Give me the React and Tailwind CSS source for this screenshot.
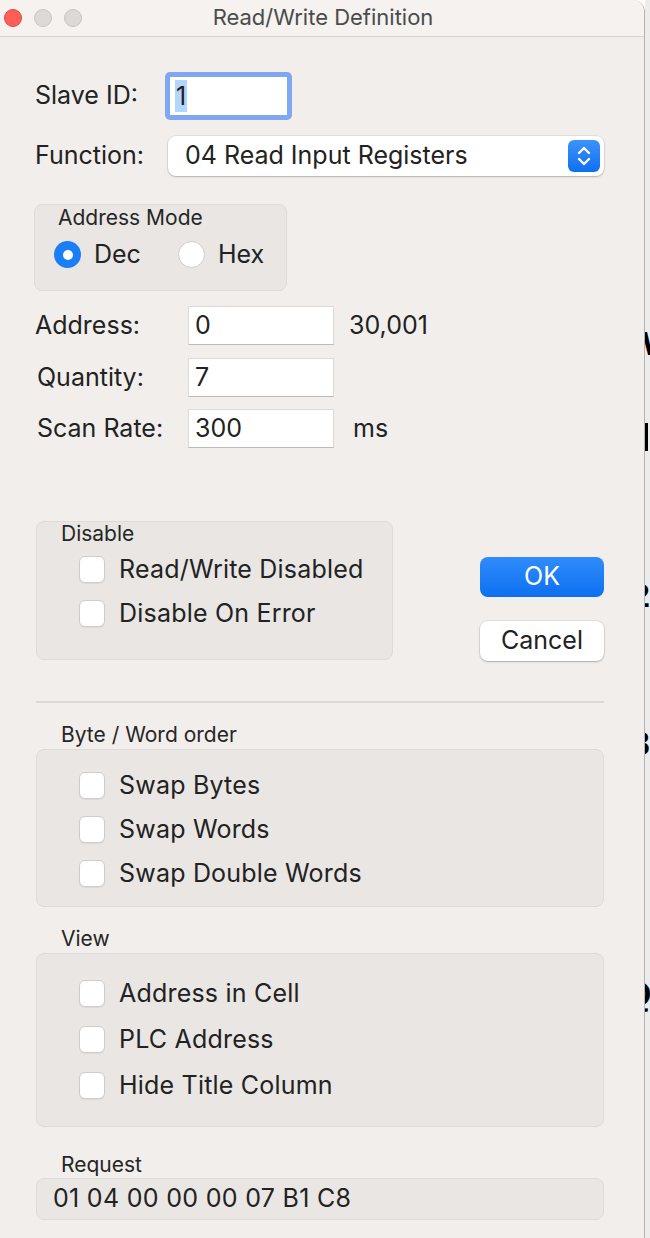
import { useState } from "react";

const font = { fontFamily: "Inter, 'Noto Sans', sans-serif" };

function Field({ value, w = "w-[146px]" }) {
  return (
    <div className={`${w} h-[39px] bg-white border border-[#dcd9d6] border-b-[#bdbab7] flex items-center pl-[6px] text-[25px] text-[#222]`}>
      {value}
    </div>
  );
}

function Check({ label }) {
  return (
    <div className="flex items-center h-[27px]">
      <div className="w-[26px] h-[27px] rounded-[6px] bg-white border border-[#cfccc9] shadow-[0_1px_1px_rgba(0,0,0,0.06)]" />
      <span className="ml-[14px] text-[25px] tracking-[0.2px] text-[#222] leading-none">{label}</span>
    </div>
  );
}

function Radio({ on, label }) {
  return (
    <div className="flex items-center">
      {on ? (
        <div className="w-[27px] h-[27px] rounded-full bg-[#1a7ef7] flex items-center justify-center">
          <div className="w-[10px] h-[10px] rounded-full bg-white" />
        </div>
      ) : (
        <div className="w-[27px] h-[27px] rounded-full bg-white border border-[#cfccc9]" />
      )}
      <span className="ml-[13px] text-[25px] text-[#222] leading-none">{label}</span>
    </div>
  );
}

export default function App() {
  const [slave] = useState("1");

  return (
    <div style={font} className="w-[650px] h-[1238px] flex bg-white overflow-hidden">
      <div className="w-[645px] h-full flex flex-col bg-[#f1eeeb] border-r border-[#b5b3b1] rounded-tr-[12px] overflow-hidden">
        {/* title bar */}
        <div className="h-[37px] shrink-0 flex items-center bg-[#f5f2ef] border-b border-[#d6d3d0]">
          <div className="flex items-center gap-[12px] pl-[4px]">
            <div className="w-[18px] h-[18px] rounded-full bg-[#fe5f57] border border-[#e2463f]" />
            <div className="w-[18px] h-[18px] rounded-full bg-[#dcd9d6] border border-[#c8c5c2]" />
            <div className="w-[18px] h-[18px] rounded-full bg-[#dcd9d6] border border-[#c8c5c2]" />
          </div>
          <div className="flex-1 text-center text-[22px] text-[#4b4b4b] pr-[80px] -mt-[2px]">Read/Write Definition</div>
        </div>

        <div className="flex flex-col pl-[35px] pr-[40px]">
          {/* slave id */}
          <div className="flex items-center h-[48px] mt-[35px]">
            <span className="w-[130px] text-[25px] text-[#222]">Slave ID:</span>
            <div className="w-[127px] h-[48px] rounded-[5px] bg-[#80a8f2] p-[5px]">
              <div className="w-full h-full bg-white flex items-center pl-[5px]">
                <span className="bg-[#b3d6fe] text-[25px] text-[#222] leading-[32px] px-[1px]">{slave}</span>
              </div>
            </div>
          </div>

          {/* function */}
          <div className="flex items-center h-[40px] mt-[16px]">
            <span className="w-[133px] text-[25px] text-[#222]">Function:</span>
            <div className="flex-1 h-[40px] bg-white rounded-[8px] shadow-[0_0_0_1px_rgba(0,0,0,0.06),0_1px_2px_rgba(0,0,0,0.2)] flex items-center pl-[17px] pr-[4px]">
              <span className="flex-1 text-[25px] text-[#222]">04 Read Input Registers</span>
              <div className="w-[32px] h-[32px] rounded-[6px] bg-gradient-to-b from-[#3b93fb] to-[#0c6ff0] flex items-center justify-center">
                <svg width="18" height="24" viewBox="0 0 18 24" fill="none" stroke="white" strokeWidth="2.4" strokeLinecap="round" strokeLinejoin="round">
                  <path d="M4 9l5-5 5 5" />
                  <path d="M4 15l5 5 5-5" />
                </svg>
              </div>
            </div>
          </div>

          {/* address mode */}
          <div className="w-[253px] h-[87px] mt-[28px] -ml-[1px] bg-[#e9e6e4] border border-[#dedbd8] rounded-[8px] flex flex-col pl-[19px]">
            <span className="text-[21px] text-[#262626] leading-[24px] mt-[1px] pl-[4px]">Address Mode</span>
            <div className="flex items-center mt-[11px]">
              <div className="w-[124px]"><Radio on label="Dec" /></div>
              <Radio label="Hex" />
            </div>
          </div>

          {/* address / quantity / scan */}
          <div className="flex items-center mt-[15px]">
            <span className="w-[153px] text-[25px] text-[#222]">Address:</span>
            <Field value="0" />
            <span className="ml-[15px] text-[25px] text-[#222]">30,001</span>
          </div>
          <div className="flex items-center mt-[13px]">
            <span className="w-[153px] pl-[2px] text-[25px] text-[#222]">Quantity:</span>
            <Field value="7" />
          </div>
          <div className="flex items-center mt-[12px]">
            <span className="w-[153px] pl-[2px] text-[25px] text-[#222]">Scan Rate:</span>
            <Field value="300" />
            <span className="ml-[19px] text-[25px] text-[#222]">ms</span>
          </div>

          {/* disable + buttons */}
          <div className="flex mt-[73px]">
            <div className="w-[357px] h-[139px] ml-[1px] bg-[#e9e6e4] border border-[#dedbd8] rounded-[8px] flex flex-col">
              <span className="text-[21px] text-[#262626] leading-[24px] pl-[24px] mt-[0px]">Disable</span>
              <div className="flex flex-col gap-[17px] pl-[42px] mt-[10px]">
                <Check label="Read/Write Disabled" />
                <Check label="Disable On Error" />
              </div>
            </div>
            <div className="flex flex-col ml-[87px] mt-[36px]">
              <div className="w-[124px] h-[40px] rounded-[8px] bg-gradient-to-b from-[#2f8cfb] to-[#0b6ff1] text-white text-[25px] flex items-center justify-center">OK</div>
              <div className="w-[124px] h-[40px] mt-[24px] rounded-[8px] bg-white shadow-[0_0_0_1px_rgba(0,0,0,0.06),0_1px_2px_rgba(0,0,0,0.22)] text-[#222] text-[25px] flex items-center justify-center">Cancel</div>
            </div>
          </div>

          <div className="h-[2px] bg-[#dcd8d5] mt-[40px] ml-[1px] w-[568px]" />

          {/* byte/word order */}
          <span className="text-[21px] text-[#262626] pl-[26px] mt-[20px] leading-[24px]">Byte / Word order</span>
          <div className="w-[568px] ml-[1px] mt-[2px] bg-[#e9e6e4] border border-[#dedbd8] rounded-[8px] flex flex-col gap-[17px] pl-[42px] pt-[22px] pb-[19px]">
            <Check label="Swap Bytes" />
            <Check label="Swap Words" />
            <Check label="Swap Double Words" />
          </div>

          {/* view */}
          <span className="text-[21px] text-[#262626] pl-[26px] mt-[20px] leading-[24px]">View</span>
          <div className="w-[568px] ml-[1px] mt-[2px] bg-[#e9e6e4] border border-[#dedbd8] rounded-[8px] flex flex-col gap-[19px] pl-[42px] pt-[26px] pb-[27px]">
            <Check label="Address in Cell" />
            <Check label="PLC Address" />
            <Check label="Hide Title Column" />
          </div>

          {/* request */}
          <span className="text-[21px] text-[#262626] pl-[26px] mt-[26px] leading-[24px]">Request</span>
          <div className="w-[568px] h-[42px] ml-[1px] mt-[1px] bg-[#e9e6e4] border border-[#dedbd8] rounded-[8px] flex items-center pl-[16px] text-[25px] tracking-[0.3px] text-[#222]">
            01 04 00 00 00 07 B1 C8
          </div>
        </div>
      </div>

      {/* window behind, mostly hidden */}
      <div className="flex-1 h-full relative bg-[#ececec] overflow-hidden text-black font-bold text-[34px]" style={{ fontFamily: "'Liberation Sans', sans-serif" }}>
        <span className="absolute left-[-3px] top-[318px]">W</span>
        <span className="absolute left-[0px] top-[423px] w-[3px] h-[28px] bg-black" />
        <span className="absolute left-[-14px] top-[570px]">2</span>
        <span className="absolute left-[-14px] top-[718px]">3</span>
        <span className="absolute left-[-20px] top-[968px]">Q</span>
      </div>
    </div>
  );
}
